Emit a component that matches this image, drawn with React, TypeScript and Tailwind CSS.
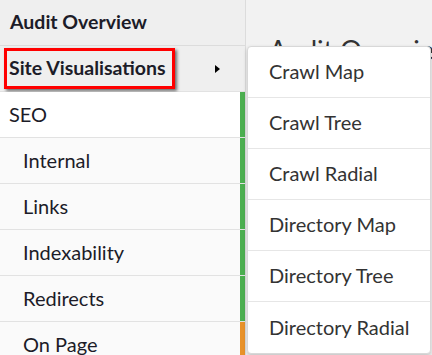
const subItems = ['Internal', 'Links', 'Indexability', 'Redirects', 'On Page'];
const visItems = ['Crawl Map', 'Crawl Tree', 'Crawl Radial', 'Directory Map', 'Directory Tree', 'Directory Radial'];

function SideRow({ label, indent, bg, strip }: { label: string; indent?: boolean; bg: string; strip: string }) {
  return (
    <div className={`flex h-[46px] shrink-0 border-b border-[#e2e2e2] ${bg}`}>
      <div className={`flex flex-1 items-center pb-[2px] text-[20px] text-[#1c1c28] ${indent ? 'pl-[23px]' : 'pl-[9px]'}`}>{label}</div>
      <div className={`w-[5px] ${strip}`} />
    </div>
  );
}

export default function App() {
  return (
    <div className="relative flex h-[355px] w-[432px] overflow-hidden bg-[#f2f2f2] font-['Lato',sans-serif]">
      <div className="flex w-[246px] shrink-0 flex-col border-r border-[#dcdcdc] bg-[#fafafa]">
        <div className="flex h-[46px] shrink-0 items-center border-b border-[#dcdcdc] bg-[#efefef] pb-[2px] pl-[10px] text-[19.5px] font-bold text-[#1c1c28]">
          Audit Overview
        </div>
        <div className="flex h-[46px] shrink-0 items-center border-b border-[#e2e2e2] bg-[#efefef] pl-[4px] pr-[25px]">
          <span className="flex h-[41px] items-center border-[3px] border-[#ff0000] pb-[2px] pl-[2px] pr-[6px] text-[19.5px] font-bold text-[#1c1c28] shadow-[2px_2px_3px_rgba(0,0,0,0.55)]">
            Site Visualisations
          </span>
          <span className="ml-auto h-0 w-0 border-y-[4px] border-l-[5px] border-y-transparent border-l-black" />
        </div>
        <SideRow label="SEO" bg="bg-white" strip="bg-[#4caf50]" />
        {subItems.map((s) => (
          <SideRow key={s} label={s} indent bg="bg-[#fafafa]" strip={s === 'On Page' ? 'bg-[#e8922a]' : 'bg-[#4caf50]'} />
        ))}
      </div>

      <div className="flex-1 pl-[23px] pt-[30px]">
        <h1 className="whitespace-nowrap text-[27px] text-[#333]">Audit Overview</h1>
      </div>

      <div className="absolute left-[247px] top-[46px] w-[184px] rounded-[4px] border border-[#d8d8d8] bg-white shadow-[0_2px_4px_rgba(0,0,0,0.2)]">
        {visItems.map((v, i) => (
          <div
            key={v}
            className={`flex h-[51px] items-center pb-[2px] pl-[21px] text-[20px] text-[#333] ${i < visItems.length - 1 ? 'border-b border-[#e6e6e6]' : ''}`}
          >
            {v}
          </div>
        ))}
      </div>
    </div>
  );
}
